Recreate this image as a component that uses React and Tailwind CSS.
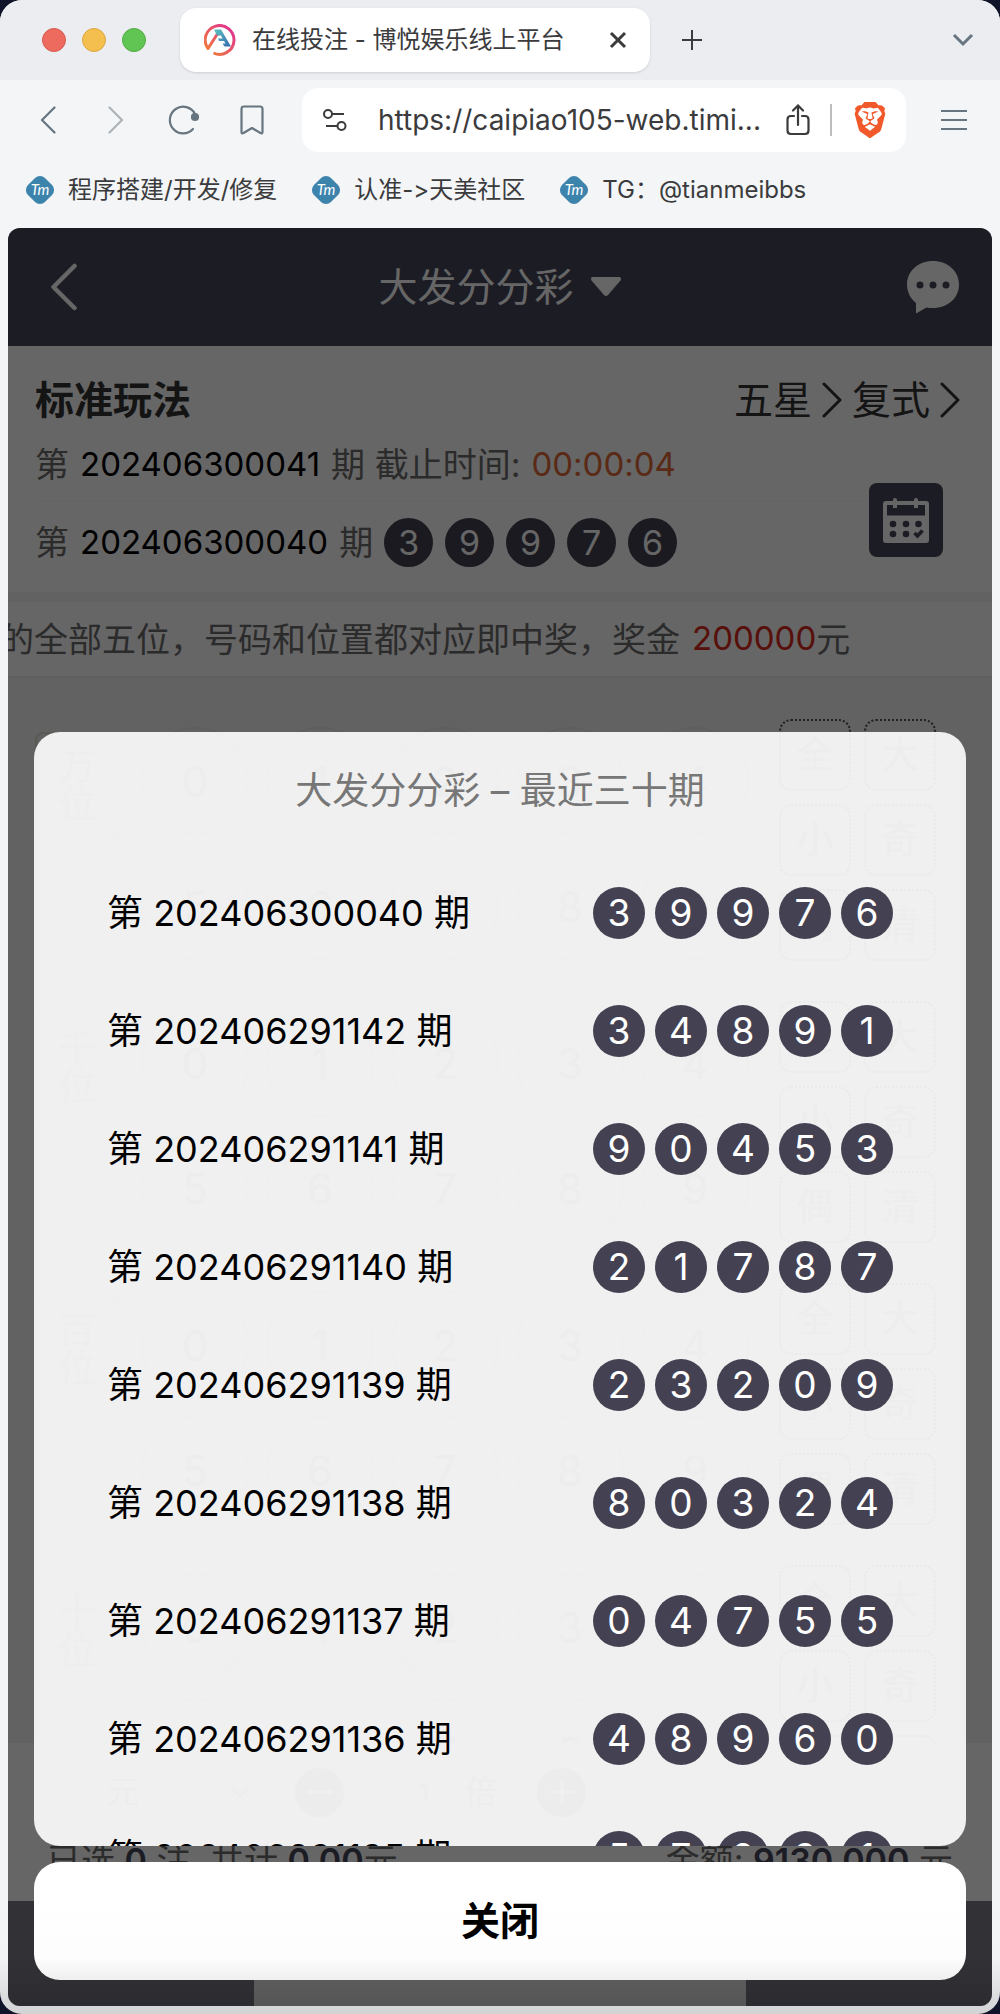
import { SiBrave } from "react-icons/si";

// Latest draws, newest first
const draws = [
  { issue: "202406300040", balls: [3, 9, 9, 7, 6] },
  { issue: "202406291142", balls: [3, 4, 8, 9, 1] },
  { issue: "202406291141", balls: [9, 0, 4, 5, 3] },
  { issue: "202406291140", balls: [2, 1, 7, 8, 7] },
  { issue: "202406291139", balls: [2, 3, 2, 0, 9] },
  { issue: "202406291138", balls: [8, 0, 3, 2, 4] },
  { issue: "202406291137", balls: [0, 4, 7, 5, 5] },
  { issue: "202406291136", balls: [4, 8, 9, 6, 0] },
  { issue: "202406291135", balls: [5, 7, 2, 3, 1] },
];

const bookmarks = ["程序搭建/开发/修复", "认准->天美社区", "TG：@tianmeibbs"];

const positions = ["万位", "千位", "百位", "十位"];
const quickPicks = ["全", "大", "小", "奇", "偶", "清"];
const digits = [0, 1, 2, 3, 4, 5, 6, 7, 8, 9];

function TabLogo() {
  return (
    <svg viewBox="0 0 32 32" className="size-8 shrink-0" fill="none">
      <defs>
        <linearGradient id="ring" x1="0" y1="1" x2="1" y2="0">
          <stop offset="0.1" stopColor="#f07a3a" />
          <stop offset="0.9" stopColor="#e0358f" />
        </linearGradient>
        <linearGradient id="leg" x1="0" y1="0" x2="1" y2="1">
          <stop offset="0" stopColor="#5cc4c0" />
          <stop offset="1" stopColor="#3568b0" />
        </linearGradient>
      </defs>
      <path
        d="M9.5 29 A14.4 14.4 0 1 0 4 24.5 L14 9"
        stroke="url(#ring)"
        strokeWidth="3"
        strokeLinejoin="round"
      />
      <path d="M10 5.5 H17 L27 22.500 H20.500 L18.500 19.500 H21.500 L20 17 H15 L14 14.500 H18.500 L17 11.500 H13 Z" fill="url(#leg)" />
    </svg>
  );
}

function BookmarkLogo() {
  return (
    <svg viewBox="0 0 30 30" className="size-[30px] shrink-0">
      <rect x="3" y="3" width="24" height="24" rx="7" fill="#3d84ad" transform="rotate(45 15 15)" />
      <text
        x="15"
        y="20"
        textAnchor="middle"
        fill="#fff"
        fontSize="15"
        fontStyle="italic"
        fontFamily="Lato, sans-serif"
      >
        Tm
      </text>
    </svg>
  );
}

function Ball({ children, small }) {
  return (
    <span
      className={`flex shrink-0 items-center justify-center rounded-full bg-[#444252] text-white ${
        small ? "size-[49px] text-[34px]" : "size-[52px] text-[37px]"
      }`}
    >
      {children}
    </span>
  );
}

function BrowserBar() {
  return (
    <header className="shrink-0 text-[#3b3b3d]">
      <div className="flex h-20 items-center bg-[#ecedf1] pl-[42px] pr-[26px]">
        <div className="flex gap-4">
          <span className="size-6 rounded-full border border-[#d95a50] bg-[#ec6a5e]" />
          <span className="size-6 rounded-full border border-[#dba742] bg-[#f4bf4f]" />
          <span className="size-6 rounded-full border border-[#52ab43] bg-[#61c554]" />
        </div>
        <div className="ml-[34px] flex h-16 w-[470px] items-center rounded-2xl bg-white pl-6 pr-[23px] shadow-sm">
          <TabLogo />
          <span className="ml-4 flex-1 whitespace-nowrap text-2xl">在线投注 - 博悦娱乐线上平台</span>
          <button aria-label="关闭标签页">
            <svg viewBox="0 0 18 18" className="size-[18px]" stroke="currentColor" strokeWidth="3">
              <path d="M2 2 L16 16 M16 2 L2 16" />
            </svg>
          </button>
        </div>
        <button aria-label="新建标签页" className="ml-[31px]">
          <svg viewBox="0 0 22 22" className="size-[22px]" stroke="currentColor" strokeWidth="2">
            <path d="M11 1 V21 M1 11 H21" />
          </svg>
        </button>
        <button aria-label="搜索标签页" className="ml-auto">
          <svg viewBox="0 0 22 14" className="h-[14px] w-[22px]" fill="none" stroke="#66757f" strokeWidth="3">
            <path d="M2 2 L11 11 L20 2" />
          </svg>
        </button>
      </div>

      <div className="flex items-center bg-[#f3f5f7] pl-10 pr-8 pt-2 text-[#66757f]">
        <button aria-label="后退">
          <svg viewBox="0 0 16 28" className="h-7 w-4" fill="none" stroke="currentColor" strokeWidth="2.2">
            <path d="M14.5 1.500 L2 14 L14.500 26.500" strokeLinecap="round" strokeLinejoin="round" />
          </svg>
        </button>
        <button aria-label="前进" className="ml-[52px] opacity-50">
          <svg viewBox="0 0 16 28" className="h-7 w-4" fill="none" stroke="currentColor" strokeWidth="2.2">
            <path d="M1.500 1.500 L14 14 L1.500 26.500" strokeLinecap="round" strokeLinejoin="round" />
          </svg>
        </button>
        <button aria-label="重新加载" className="ml-11">
          <svg viewBox="0 0 32 32" className="size-8" fill="none" stroke="currentColor" strokeWidth="2.200">
            <path d="M25 25 A13.300 13.300 0 1 1 27 10" strokeLinecap="round" />
            <circle cx="27" cy="13" r="3" fill="currentColor" />
          </svg>
        </button>
        <button aria-label="添加书签" className="ml-10">
          <svg viewBox="0 0 24 30" className="h-[30px] w-6" fill="none" stroke="currentColor" strokeWidth="2.200">
            <path
              d="M4 1.500 H20 Q22.500 1.500 22.500 4 V27 Q22.500 29 20.500 28 L12 23 L3.500 28 Q1.500 29 1.500 27 V4 Q1.500 1.500 4 1.500 Z"
              strokeLinejoin="round"
            />
          </svg>
        </button>
        <div className="ml-[38px] flex h-16 flex-1 items-center rounded-2xl bg-white pl-5 pr-[18px] text-[#3b3b3d]">
          <svg viewBox="0 0 26 24" className="h-6 w-[26px] shrink-0" fill="none" stroke="currentColor" strokeWidth="2">
            <circle cx="6" cy="6" r="4" />
            <path d="M10 6 H22" />
            <circle cx="19.500" cy="18" r="4" />
            <path d="M4 18 H15" />
          </svg>
          <input
            aria-label="地址"
            readOnly
            defaultValue="https://caipiao105-web.timi..."
            className="ml-[30px] w-0 flex-1 bg-transparent text-[28px] outline-none"
          />
          <button aria-label="分享" className="ml-4">
            <svg viewBox="0 0 24 32" className="h-8 w-6" fill="none" stroke="currentColor" strokeWidth="2.200" strokeLinecap="round">
              <path d="M8 12 H5 Q1.500 12 1.500 15.500 V26.500 Q1.500 30 5 30 H19 Q22.500 30 22.500 26.500 V15.500 Q22.500 12 19 12 H16" />
              <path d="M12 21 V2 M7 6.500 L12 1.500 L17 6.500" />
            </svg>
          </button>
          <span className="ml-5 h-8 w-0.5 bg-[#bdbdbd]" />
          <button aria-label="Brave Shields" className="ml-5">
            <SiBrave className="size-9 text-[#f1592a]" />
          </button>
        </div>
        <button aria-label="菜单" className="ml-[34px]">
          <svg viewBox="0 0 28 22" className="h-[22px] w-7" stroke="currentColor" strokeWidth="2.200">
            <path d="M1 2 H27 M1 11 H27 M1 20 H27" />
          </svg>
        </button>
      </div>

      <nav className="flex h-[76px] items-center gap-[34px] bg-[#f3f5f7] pl-[25px] text-2xl leading-8">
        {bookmarks.map((label) => (
          <a key={label} href="#" className="flex items-center gap-[13px] whitespace-nowrap">
            <BookmarkLogo />
            {label}
          </a>
        ))}
      </nav>
    </header>
  );
}

function GameHeader() {
  return (
    <div className="flex h-[118px] shrink-0 items-center justify-between bg-[#48465a] px-[30px] text-white">
      <button aria-label="返回" className="flex w-14 pl-3">
        <svg viewBox="0 0 28 48" className="h-12 w-7" fill="none" stroke="currentColor" strokeWidth="4.500">
          <path d="M24.500 3 L3.500 24 L24.500 45" strokeLinecap="round" strokeLinejoin="round" />
        </svg>
      </button>
      <button className="flex items-center gap-4 text-[39px] leading-[56px]">
        大发分分彩
        <svg viewBox="0 0 32 20" className="h-5 w-8" fill="currentColor">
          <path d="M2.500 0 H29.500 Q32 1 30.500 3.500 L18 18 Q16 20 14 18 L1.500 3.500 Q0 1 2.500 0 Z" />
        </svg>
      </button>
      <button aria-label="客服" className="flex w-14">
        <svg viewBox="0 0 54 54" className="size-[54px]">
          <path
            d="M27 1 C42 1 53 11.500 53 24.500 C53 38 42 48 27 48 Q23.500 48 20.500 47.500 L10 53.500 V43 C4.500 38.500 1 32 1 24.500 C1 11.500 12 1 27 1 Z"
            fill="#fff"
          />
          <g fill="#48465a">
            <circle cx="14" cy="25" r="3.500" />
            <circle cx="27" cy="25" r="3.500" />
            <circle cx="40" cy="25" r="3.500" />
          </g>
        </svg>
      </button>
    </div>
  );
}

function PlayLink({ children }) {
  return (
    <button className="flex items-center gap-2.5">
      {children}
      <svg viewBox="0 0 20 36" className="h-9 w-5" fill="none" stroke="currentColor" strokeWidth="3">
        <path d="M2 2 L18 18 L2 34" strokeLinecap="round" strokeLinejoin="round" />
      </svg>
    </button>
  );
}

function IssueInfo() {
  return (
    <div className="flex shrink-0 flex-col bg-white pb-[25px] pl-[27px] pr-[22px] pt-[26px] text-[34px] text-[#6b6b6b]">
      <div className="flex h-14 items-center justify-between text-[39px] text-[#333]">
        <h1 className="font-bold">标准玩法</h1>
        <div className="flex gap-2.5 pr-2.5">
          <PlayLink>五星</PlayLink>
          <PlayLink>复式</PlayLink>
        </div>
      </div>
      <div className="flex items-center justify-between">
        <div className="flex-1">
          <p className="flex h-[74px] items-center gap-[11px] whitespace-nowrap border-b border-[#f7f7f7]">
            <span>第</span>
            <span className="text-[33px] text-black">202406300041</span>
            <span>期 截止时间:</span>
            <span className="text-[33px] text-[#e06a3a]">00:00:04</span>
          </p>
          <div className="flex h-[65px] items-end gap-[11px] whitespace-nowrap leading-[49px]">
            <span>第</span>
            <span className="text-[33px] text-black">202406300040</span>
            <span>期</span>
            <span className="flex gap-3">
              {draws[0].balls.map((n, i) => (
                <Ball key={i} small>
                  {n}
                </Ball>
              ))}
            </span>
          </div>
        </div>
        <button aria-label="开奖记录" className="mr-[27px] mt-11 rounded-lg bg-[#48465a]">
          <svg viewBox="0 0 74 74" className="size-[74px]">
            <g fill="#fff">
              <rect x="14" y="18" width="46" height="42" rx="3" />
              <rect x="24" y="15" width="4" height="10" rx="2" />
              <rect x="45" y="15" width="4" height="10" rx="2" />
            </g>
            <path d="M18 22 H24 V25 H28 V22 H45 V25 H49 V22 H56 V32.500 H18 Z" fill="#48465a" />
            <g fill="#48465a">
              <circle cx="24" cy="41" r="3.300" />
              <circle cx="37" cy="41" r="3.300" />
              <circle cx="49.500" cy="41" r="3.300" />
              <circle cx="24" cy="51" r="3.300" />
              <circle cx="37" cy="51" r="3.300" />
            </g>
            <path d="M45.500 50 L48.500 53 L53.500 47.500" fill="none" stroke="#48465a" strokeWidth="3.500" />
          </svg>
        </button>
      </div>
    </div>
  );
}

function PositionRow({ label }) {
  return (
    <div className="flex h-[282px] shrink-0 items-start pl-[27px]">
      <span className="mt-[13px] flex h-[108px] w-[84px] items-center justify-center rounded-lg border-2 border-[#e2e0d4] px-5 text-center text-[37px] leading-[38px] text-[#c5c3b8]">
        {label}
      </span>
      <div className="ml-[22px] mt-2 grid grid-cols-[repeat(5,108px)] gap-[17px]">
        {digits.map((n) => (
          <button key={n} className="size-[108px] rounded-full border-2 border-[#ececec] text-[42px] text-[#999]">
            {n}
          </button>
        ))}
      </div>
      <div className="ml-[30px] grid grid-cols-[72px_72px] gap-[13px]">
        {quickPicks.map((pick) => (
          <button key={pick} className="h-[72px] rounded-xl border-2 border-dotted border-[#555] text-[37px] text-[#999]">
            {pick}
          </button>
        ))}
      </div>
    </div>
  );
}

function BetBar() {
  return (
    <div className="shrink-0 bg-white">
      <div className="flex h-[158px] flex-col justify-between px-[39px] pt-[17px]">
        <div className="flex h-16 items-center text-[32px] text-[#999]">
          <div className="flex h-full w-[210px] items-center rounded-xl bg-[#f7f7f7] pl-[60px] pr-2">
            <select aria-label="单位" className="w-full appearance-none bg-transparent">
              <option>元</option>
            </select>
            <svg viewBox="0 0 18 10" className="h-2.5 w-[18px] shrink-0" fill="none" stroke="currentColor" strokeWidth="2">
              <path d="M1 1 L9 9 L17 1" />
            </svg>
          </div>
          <button aria-label="减少" className="ml-[38px] flex size-[49px] items-center justify-center rounded-full bg-[#888] text-white">
            <svg viewBox="0 0 24 24" className="size-6" stroke="currentColor" strokeWidth="3">
              <path d="M0 12 H24" />
            </svg>
          </button>
          <label className="ml-[15px] flex h-full w-[163px] items-center rounded-xl bg-[#f7f7f7]">
            <input aria-label="倍数" defaultValue="1" className="w-[106px] bg-transparent pl-6 text-center text-[26px]" />
            倍
          </label>
          <button aria-label="增加" className="ml-[15px] flex size-[49px] items-center justify-center rounded-full bg-[#888] text-white">
            <svg viewBox="0 0 24 24" className="size-6" stroke="currentColor" strokeWidth="3">
              <path d="M0 12 H24 M12 0 V24" />
            </svg>
          </button>
        </div>
        <p className="flex h-[61px] items-start justify-between text-[34px] leading-[42px] text-[#6b6b6b]">
          <span>
            已选 <b className="font-semibold text-[#48465a]">0</b> 注, 共计{" "}
            <b className="font-semibold text-[#48465a]">0.00</b>元
          </span>
          <span>
            金额: <b className="font-semibold text-[#48465a]">9130.000</b> 元
          </span>
        </p>
      </div>
      <div className="grid h-[105px] grid-cols-4">
        <span className="bg-[#7d7b87]" />
        <span className="col-span-2 bg-[#f2f2f2]" />
        <span className="bg-[#7d7b87]" />
      </div>
    </div>
  );
}

function HistorySheet() {
  return (
    <div className="absolute inset-0 flex flex-col justify-end gap-4 bg-black/60 px-[26px] pb-[26px]" role="dialog">
      <section className="h-[1114px] overflow-hidden rounded-[26px] bg-[#fcfcfc]/92">
        <h2 className="flex h-[122px] items-center justify-center pb-1 text-[37px] text-[#777]">
          大发分分彩 – 最近三十期
        </h2>
        <ul>
          {draws.map((draw) => (
            <li key={draw.issue} className="flex h-[118px] items-center justify-between pl-[73px] pr-[73px]">
              <span className="whitespace-nowrap text-[36px] text-black">第 {draw.issue} 期</span>
              <span className="flex gap-2.5">
                {draw.balls.map((n, i) => (
                  <Ball key={i}>{n}</Ball>
                ))}
              </span>
            </li>
          ))}
        </ul>
      </section>
      <button className="h-[118px] shrink-0 rounded-[26px] bg-white text-[39px] font-bold text-black">关闭</button>
    </div>
  );
}

export default function App() {
  return (
    <div className="h-screen bg-[#10142a] font-['Inter','Noto_Sans_CJK_SC',sans-serif] [font-feature-settings:'calt'_0]">
      <div className="relative flex h-full flex-col overflow-hidden rounded-[22px] bg-[#f3f5f7]">
        <BrowserBar />
        <main className="relative mx-2 mb-2 flex min-h-0 flex-1 flex-col overflow-hidden rounded-xl bg-[#f5f5f5]">
          <GameHeader />
          <IssueInfo />
          <p className="mt-2.5 flex h-[76px] shrink-0 items-center whitespace-nowrap border-b-2 border-[#efefef] bg-white text-[34px] text-[#6b6b6b]">
            <span className="-ml-2">的全部五位，号码和位置都对应即中奖，奖金</span>
            <span className="pl-3 text-[33px] text-[#dc2a20]">200000</span>元
          </p>
          <div className="min-h-0 flex-1 overflow-hidden pt-[41px]">
            {positions.map((label) => (
              <PositionRow key={label} label={label} />
            ))}
          </div>
          <BetBar />
          <HistorySheet />
        </main>
        <div className="pointer-events-none absolute inset-x-0 bottom-0 h-28 bg-linear-to-b from-transparent via-black/1 to-black/14" />
      </div>
    </div>
  );
}
